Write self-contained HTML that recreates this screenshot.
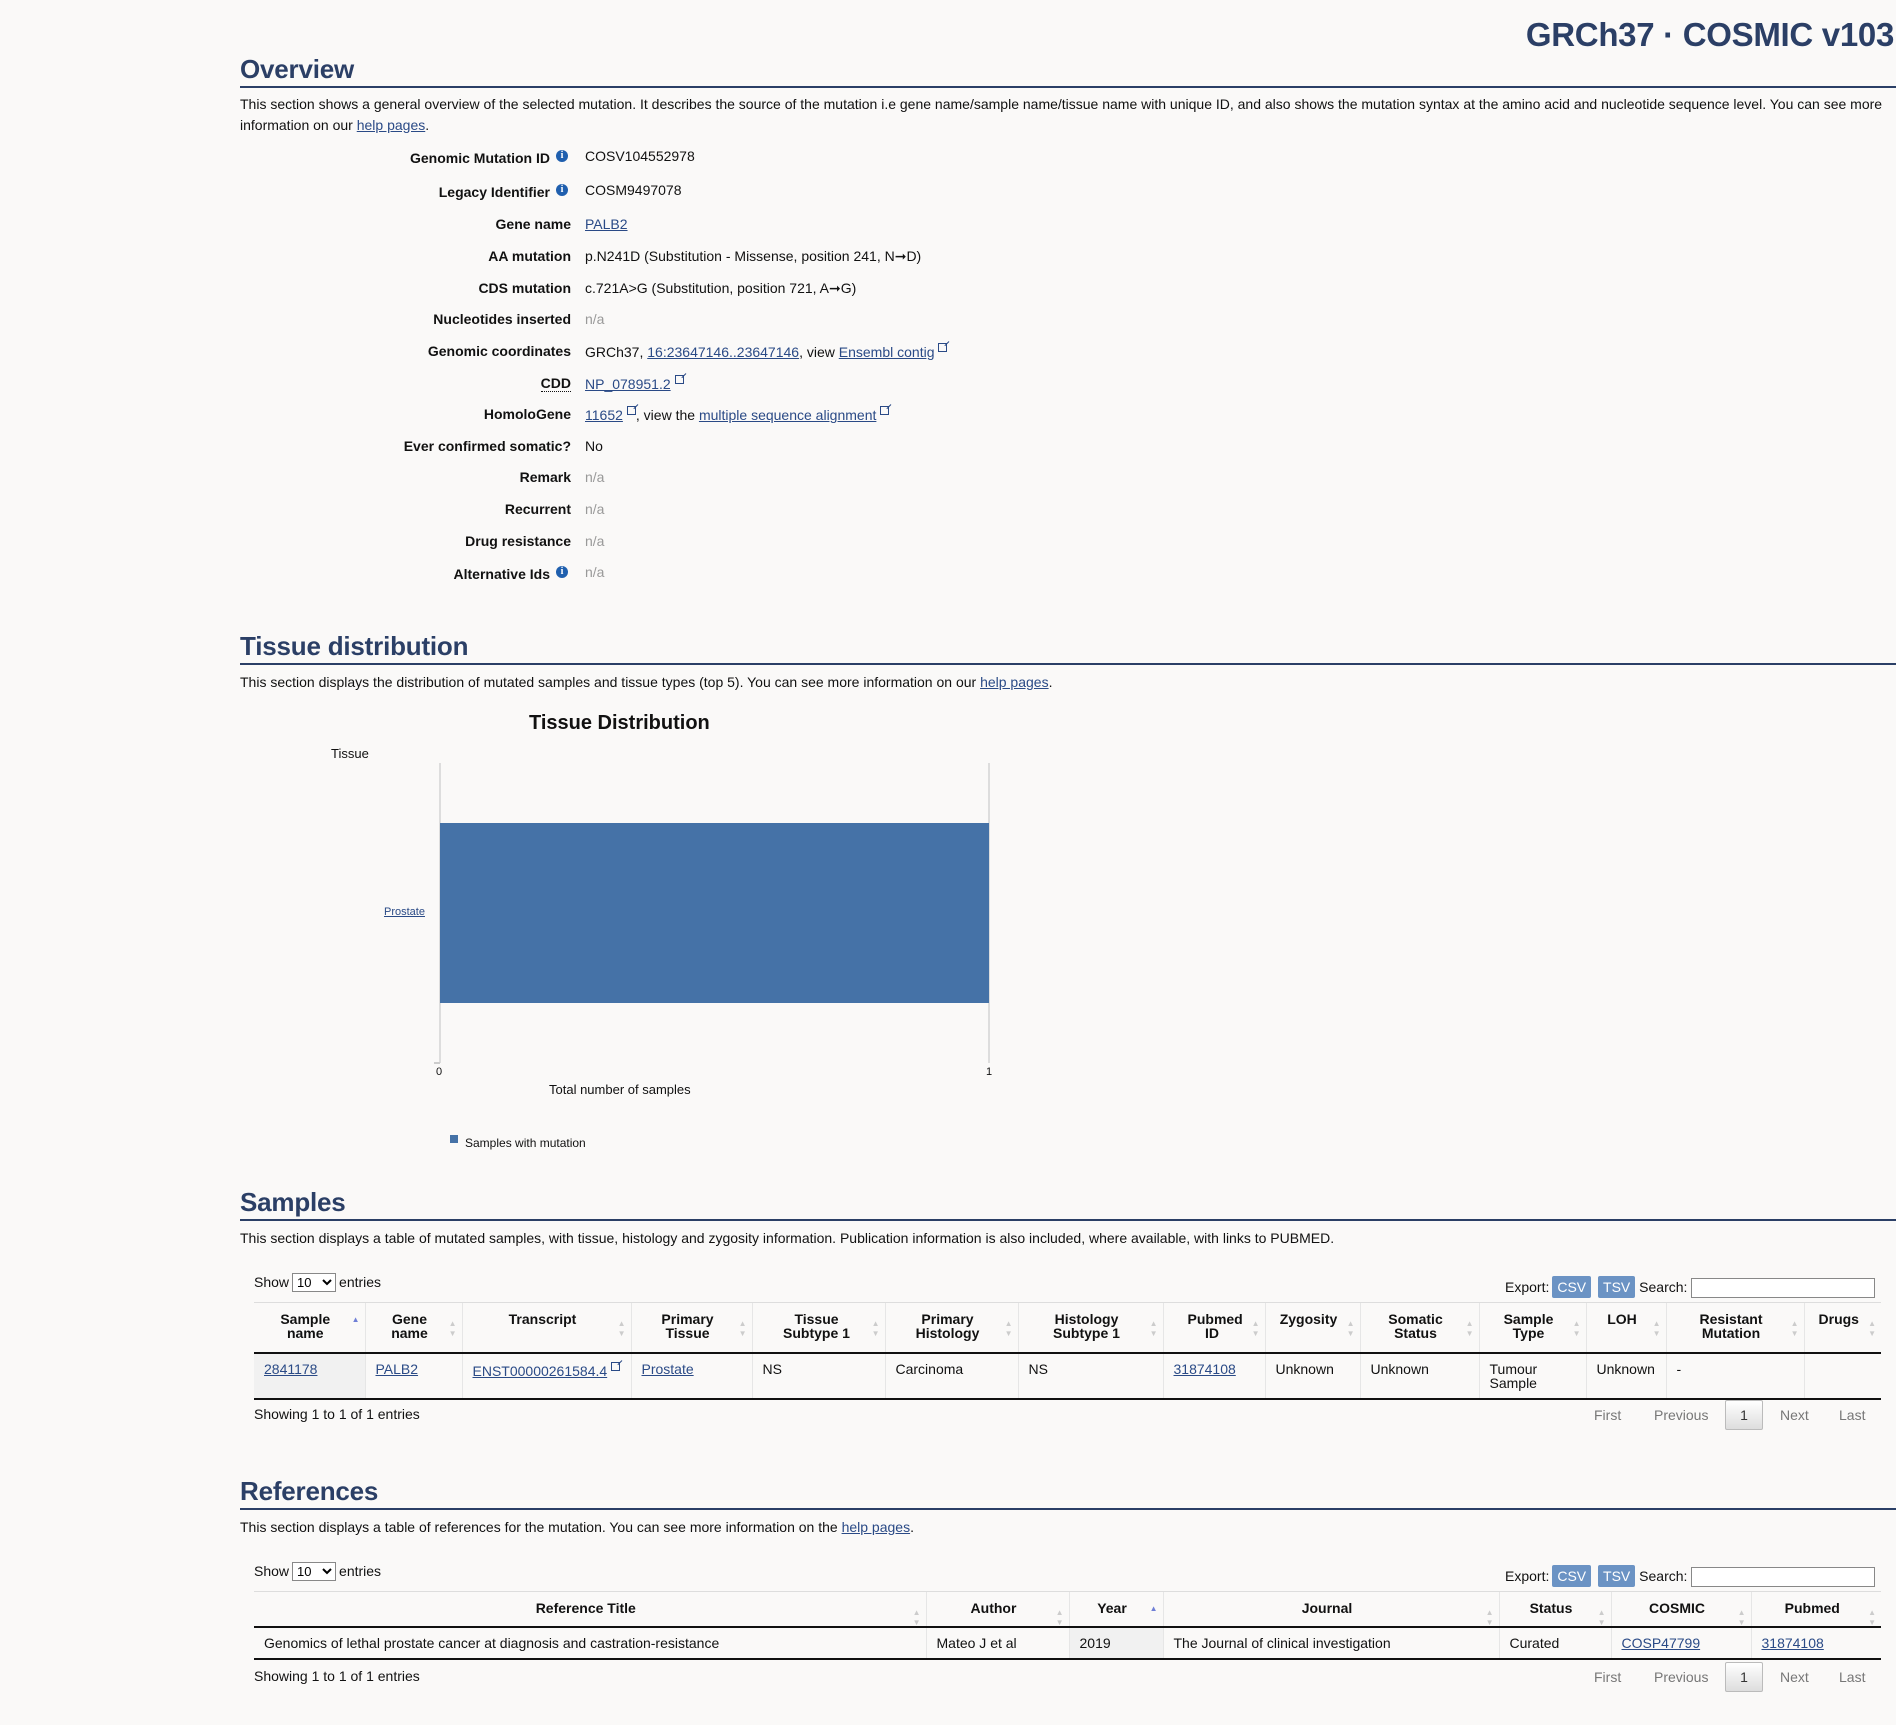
<!DOCTYPE html>
<html><head><meta charset="utf-8">
<style>
*{margin:0;padding:0;box-sizing:border-box}
body{width:1896px;height:1725px;background:#faf9f8;font-family:"Liberation Sans",sans-serif;font-size:14px;color:#111;position:relative;overflow:hidden}
.a{position:absolute;white-space:nowrap}
a{color:#2a4a86;text-decoration:underline}
.top{right:2px;top:16px;font-size:33px;font-weight:bold;color:#2b3f66;letter-spacing:-0.3px}
h2{position:absolute;left:240px;font-size:26px;font-weight:bold;color:#2b3f66;letter-spacing:-0.2px}
.rule{position:absolute;left:240px;right:0;height:2px;background:#2b3f66}
.p{position:absolute;left:240px;width:1650px;line-height:20.5px}
.lab{position:absolute;right:1325px;font-weight:bold;white-space:nowrap;text-align:right}
.val{position:absolute;left:585px;white-space:nowrap}
.na{color:#999}
.i{display:inline-block;width:12px;height:12px;border-radius:50%;background:#1f5fae;color:#fff;font-size:10px;font-weight:bold;text-align:center;line-height:12px;vertical-align:5px;margin-left:6px;font-family:"Liberation Serif",serif}
.ext{display:inline-block;width:9px;height:9px;border:1px solid #2a4a86;vertical-align:5px;margin-left:4px;position:relative}
.ext:after{content:"";position:absolute;right:-3px;top:-3px;width:6px;height:1px;background:#2a4a86;transform:rotate(-45deg);transform-origin:right}
table{position:absolute;border-collapse:collapse;font-size:14px;table-layout:fixed}
th{font-weight:bold;text-align:center;vertical-align:top;padding:9px 20px 8px 12px;line-height:14px;border-top:1px solid #ddd;border-left:1px solid #e6e6e6;border-bottom:2px solid #111;position:relative}
th.w{padding-left:24px;padding-right:28px}
th:first-child,td:first-child{border-left:none}
th:after{content:"▲\A▼";white-space:pre;position:absolute;right:5px;top:16px;font-size:8px;line-height:10px;color:#ccc}
th.s:after{content:"▲";color:#6f7fd6;top:12px}
td{padding:8px 10px;vertical-align:top;line-height:14px;border-left:1px solid #e6e6e6;border-bottom:2px solid #111}
td.s{background:#f1f1f1}
.show{position:absolute;left:254px}
.show select{font-size:13px;width:44px;height:19px;margin:0 3px;background:#fff;border:1px solid #888}
.exp{position:absolute;left:1505px}
.btn{display:inline-block;background:#6b93c4;color:#fff;padding:2px 5px;border-radius:2px;margin-left:3px;line-height:18px}
.srch{display:inline-block;width:184px;height:20px;border:1px solid #888;background:#fff;vertical-align:middle;margin-left:4px}
.pg{position:absolute;left:1594px;color:#777}
.pg span{position:absolute;white-space:nowrap}
.pg .cur{border:1px solid #bbb;background:linear-gradient(#fff,#ddd);color:#333;width:38px;height:30px;text-align:center;line-height:28px;border-radius:2px}
</style></head><body>
<div class="a top">GRCh37 · COSMIC v103</div>

<h2 style="top:54px">Overview</h2>
<div class="rule" style="top:86px"></div>
<div class="p" style="top:94px">This section shows a general overview of the selected mutation. It describes the source of the mutation i.e gene name/sample name/tissue name with unique ID, and also shows the mutation syntax at the amino acid and nucleotide sequence level. You can see more information on our <a>help pages</a>.</div>

<div class="lab" style="top:150px;right:1328px">Genomic Mutation ID<span class="i">i</span></div><div class="val" style="top:148px">COSV104552978</div>
<div class="lab" style="top:184px;right:1328px">Legacy Identifier<span class="i">i</span></div><div class="val" style="top:182px">COSM9497078</div>
<div class="lab" style="top:216px">Gene name</div><div class="val" style="top:216px"><a>PALB2</a></div>
<div class="lab" style="top:248px">AA mutation</div><div class="val" style="top:248px">p.N241D (Substitution - Missense, position 241, N➞D)</div>
<div class="lab" style="top:280px">CDS mutation</div><div class="val" style="top:280px">c.721A&gt;G (Substitution, position 721, A➞G)</div>
<div class="lab" style="top:311px">Nucleotides inserted</div><div class="val na" style="top:311px">n/a</div>
<div class="lab" style="top:343px">Genomic coordinates</div><div class="val" style="top:343px">GRCh37, <a>16:23647146..23647146</a>, view <a>Ensembl contig</a><span class="ext"></span></div>
<div class="lab" style="top:375px;border-bottom:1px dotted #111;line-height:16px">CDD</div><div class="val" style="top:375px"><a>NP_078951.2</a><span class="ext"></span></div>
<div class="lab" style="top:406px">HomoloGene</div><div class="val" style="top:406px"><a>11652</a><span class="ext"></span>, view the <a>multiple sequence alignment</a><span class="ext"></span></div>
<div class="lab" style="top:438px">Ever confirmed somatic?</div><div class="val" style="top:438px">No</div>
<div class="lab" style="top:469px">Remark</div><div class="val na" style="top:469px">n/a</div>
<div class="lab" style="top:501px">Recurrent</div><div class="val na" style="top:501px">n/a</div>
<div class="lab" style="top:533px">Drug resistance</div><div class="val na" style="top:533px">n/a</div>
<div class="lab" style="top:566px;right:1328px">Alternative Ids<span class="i">i</span></div><div class="val na" style="top:564px">n/a</div>

<h2 style="top:631px">Tissue distribution</h2>
<div class="rule" style="top:663px"></div>
<div class="p" style="top:672px">This section displays the distribution of mutated samples and tissue types (top 5). You can see more information on our <a>help pages</a>.</div>

<div class="a" style="left:529px;top:712px;font-size:20px;font-weight:bold">Tissue Distribution</div>
<div class="a" style="left:331px;top:746px;font-size:13px">Tissue</div>
<div class="a" style="left:439px;top:763px;width:2px;height:300px;background:#ddd"></div>
<div class="a" style="left:988px;top:763px;width:2px;height:300px;background:#ddd"></div>
<div class="a" style="left:434px;top:1062px;width:6px;height:2px;background:#ccc"></div>
<div class="a" style="left:440px;top:823px;width:549px;height:180px;background:#4572a7"></div>
<div class="a" style="left:384px;top:906px;font-size:11px"><a>Prostate</a></div>
<div class="a" style="left:436px;top:1066px;font-size:11px">0</div>
<div class="a" style="left:986px;top:1066px;font-size:11px">1</div>
<div class="a" style="left:549px;top:1082px;font-size:13px">Total number of samples</div>
<div class="a" style="left:450px;top:1135px;width:8px;height:8px;background:#4572a7"></div>
<div class="a" style="left:465px;top:1136px;font-size:12px">Samples with mutation</div>

<h2 style="top:1187px">Samples</h2>
<div class="rule" style="top:1219px"></div>
<div class="p" style="top:1228px">This section displays a table of mutated samples, with tissue, histology and zygosity information. Publication information is also included, where available, with links to PUBMED.</div>

<div class="show" style="top:1273px">Show<select><option>10</option></select>entries</div>
<div class="exp" style="top:1276px">Export:<span class="btn">CSV</span> <span class="btn">TSV</span> Search:<span class="srch"></span></div>
<table style="left:254px;top:1302px;width:1627px">
<colgroup><col style="width:111px"><col style="width:97px"><col style="width:169px"><col style="width:121px"><col style="width:133px"><col style="width:133px"><col style="width:145px"><col style="width:102px"><col style="width:95px"><col style="width:119px"><col style="width:107px"><col style="width:80px"><col style="width:138px"><col style="width:77px"></colgroup>
<tr style="height:50px"><th class="s">Sample name</th><th>Gene name</th><th>Transcript</th><th>Primary Tissue</th><th class="w">Tissue Subtype 1</th><th>Primary Histology</th><th>Histology Subtype 1</th><th class="w">Pubmed ID</th><th>Zygosity</th><th>Somatic Status</th><th>Sample Type</th><th>LOH</th><th>Resistant Mutation</th><th>Drugs</th></tr>
<tr style="height:44px"><td class="s"><a>2841178</a></td><td><a>PALB2</a></td><td style="padding-right:0"><a>ENST00000261584.4</a><span class="ext"></span></td><td><a>Prostate</a></td><td>NS</td><td>Carcinoma</td><td>NS</td><td><a>31874108</a></td><td>Unknown</td><td>Unknown</td><td>Tumour Sample</td><td>Unknown</td><td>-</td><td></td></tr>
</table>
<div class="a" style="left:254px;top:1406px">Showing 1 to 1 of 1 entries</div>
<div class="pg" style="top:1407px"><span style="left:0">First</span><span style="left:60px">Previous</span><span class="cur" style="left:131px;top:-7px">1</span><span style="left:186px">Next</span><span style="left:245px">Last</span></div>

<h2 style="top:1476px">References</h2>
<div class="rule" style="top:1508px"></div>
<div class="p" style="top:1517px">This section displays a table of references for the mutation. You can see more information on the <a>help pages</a>.</div>

<div class="show" style="top:1562px">Show<select><option>10</option></select>entries</div>
<div class="exp" style="top:1565px">Export:<span class="btn">CSV</span> <span class="btn">TSV</span> Search:<span class="srch"></span></div>
<table style="left:254px;top:1591px;width:1627px">
<colgroup><col style="width:672px"><col style="width:143px"><col style="width:94px"><col style="width:336px"><col style="width:112px"><col style="width:140px"><col style="width:130px"></colgroup>
<tr style="height:35px"><th>Reference Title</th><th>Author</th><th class="s">Year</th><th>Journal</th><th>Status</th><th>COSMIC</th><th>Pubmed</th></tr>
<tr style="height:32px"><td style="text-align:left">Genomics of lethal prostate cancer at diagnosis and castration-resistance</td><td>Mateo J et al</td><td class="s">2019</td><td>The Journal of clinical investigation</td><td>Curated</td><td><a>COSP47799</a></td><td><a>31874108</a></td></tr>
</table>
<div class="a" style="left:254px;top:1668px">Showing 1 to 1 of 1 entries</div>
<div class="pg" style="top:1669px"><span style="left:0">First</span><span style="left:60px">Previous</span><span class="cur" style="left:131px;top:-7px">1</span><span style="left:186px">Next</span><span style="left:245px">Last</span></div>
</body></html>
